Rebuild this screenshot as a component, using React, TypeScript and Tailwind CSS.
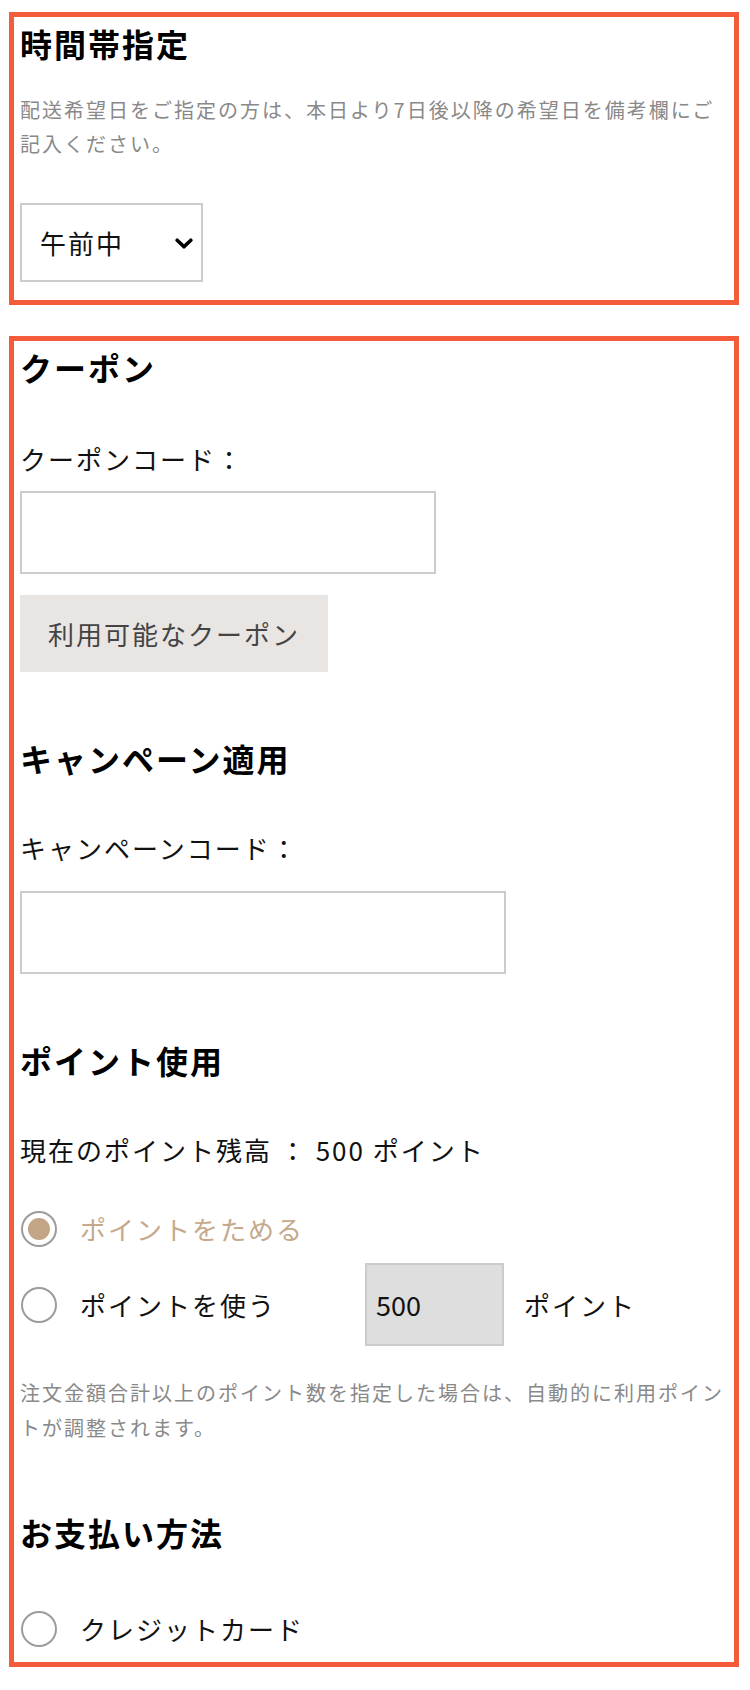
import React from "react";

function Radio({ checked }: { checked?: boolean }) {
  return (
    <span className="ml-[1px] flex h-[36px] w-[36px] shrink-0 items-center justify-center rounded-full border-2 border-[#9c9c9c] bg-white">
      {checked && <span className="h-[22px] w-[22px] rounded-full bg-[#c2a586]" />}
    </span>
  );
}

export default function App() {
  return (
    <div className="min-h-[1690px] w-[750px] bg-white pt-[12px] font-['Noto_Sans_CJK_JP',sans-serif] text-[#111]">
      <section className="ml-[9px] w-[730px] border-[5px] border-[#f35b3a] pb-[18px] pl-[6px] pr-[8px] pt-[2px]">
        <h2 className="text-[32px] font-bold leading-[48px] tracking-[2px] text-black">時間帯指定</h2>
        <p className="mt-[26px] text-[20px] leading-[34px] tracking-[2px] text-[#898989]">
          配送希望日をご指定の方は、本日より7日後以降の希望日を備考欄にご記入ください。
        </p>
        <div className="relative mt-[42px] h-[79px] w-[183px]">
          <select className="h-full w-full appearance-none rounded-none border-2 border-[#cccccc] bg-white pl-[18px] text-[26px] tracking-[2px] text-[#111] outline-none">
            <option>午前中</option>
          </select>
          <svg
            className="pointer-events-none absolute left-[155px] top-[35px]"
            width="18"
            height="12"
            viewBox="0 0 18 12"
          >
            <path d="M2.2 2.2 L9 8.8 L15.8 2.2" stroke="#000" strokeWidth="3.6" fill="none" strokeLinecap="round" strokeLinejoin="round" />
          </svg>
        </div>
      </section>

      <section className="ml-[9px] mt-[31px] w-[730px] border-[5px] border-[#f35b3a] pb-[13px] pl-[6px] pr-[8px] pt-[2px]">
        <h2 className="text-[32px] font-bold leading-[48px] tracking-[2px] text-black">クーポン</h2>
        <p className="mt-[48px] text-[26px] leading-[40px] tracking-[2px]">クーポンコード：</p>
        <input type="text" className="mt-[12px] block h-[83px] w-[416px] rounded-none border-2 border-[#cccccc] bg-white outline-none" />
        <button className="mt-[21px] block h-[77px] w-[308px] bg-[#e8e5e2] pl-[28px] text-left text-[26px] tracking-[2px] text-[#444]">
          利用可能なクーポン
        </button>

        <h2 className="mt-[62px] text-[32px] font-bold leading-[48px] tracking-[2px] text-black">キャンペーン適用</h2>
        <p className="mt-[46px] text-[26px] leading-[40px] tracking-[2px]">キャンペーンコード：</p>
        <input type="text" className="mt-[23px] block h-[83px] w-[486px] rounded-none border-2 border-[#cccccc] bg-white outline-none" />

        <h2 className="mt-[62px] text-[32px] font-bold leading-[48px] tracking-[2px] text-black">ポイント使用</h2>
        <p className="mt-[46px] text-[26px] leading-[40px] tracking-[2px]">現在のポイント残高 ： 500 ポイント</p>

        <label className="mt-[39px] flex h-[40px] items-center">
          <Radio checked />
          <span className="ml-[23px] text-[26px] leading-[40px] tracking-[2px] text-[#c6a98b]">ポイントをためる</span>
        </label>
        <div className="mt-[14px] flex h-[83px] items-center">
          <Radio />
          <span className="ml-[23px] w-[285px] text-[26px] leading-[40px] tracking-[2px]">ポイントを使う</span>
          <input
            type="text"
            defaultValue="500"
            className="h-[83px] w-[139px] rounded-none border-2 border-[#cccccc] bg-[#dedede] pl-[9px] text-[27px] text-[#111] outline-none"
          />
          <span className="ml-[20px] text-[26px] leading-[40px] tracking-[2px]">ポイント</span>
        </div>
        <p className="mt-[29px] text-[20px] leading-[35px] tracking-[2px] text-[#898989]">
          注文金額合計以上のポイント数を指定した場合は、自動的に利用ポイントが調整されます。
        </p>

        <h2 className="mt-[63px] text-[32px] font-bold leading-[48px] tracking-[2px] text-black">お支払い方法</h2>
        <label className="mt-[53px] flex h-[40px] items-center">
          <Radio />
          <span className="ml-[23px] text-[26px] leading-[40px] tracking-[2px]">クレジットカード</span>
        </label>
      </section>
    </div>
  );
}
